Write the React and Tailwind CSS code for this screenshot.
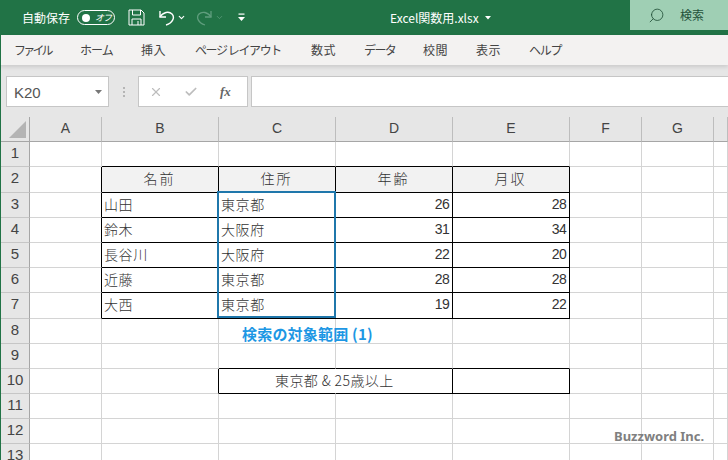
import React from 'react';
import { Search, ChevronDown, Check, X } from 'lucide-react';

const jp = { fontFamily: '"Noto Sans CJK JP", "Liberation Sans", sans-serif' };
const latin = { fontFamily: '"Liberation Sans", sans-serif' };

const tabs = [
  ['ファイル', 'w-[66px] tracking-[-2.8px]'],
  ['ホーム', 'w-[61px] tracking-[-1px]'],
  ['挿入', 'w-[54px] tracking-[0.5px]'],
  ['ページ レイアウト', 'w-[116px] tracking-[-1.4px]'],
  ['数式', 'w-[53px] tracking-[0.5px]'],
  ['データ', 'w-[59px] tracking-[-1.6px]'],
  ['校閲', 'w-[53px] tracking-[0.5px]'],
  ['表示', 'w-[53px] tracking-[0.5px]'],
  ['ヘルプ', 'w-[60px] tracking-[-1.2px]'],
];

const colHeaders = ['A', 'B', 'C', 'D', 'E', 'F', 'G', 'H'];
const colClass = {
  A: 'w-[72px]',
  B: 'w-[117px]',
  C: 'w-[117px]',
  D: 'w-[117px]',
  E: 'w-[117px]',
  F: 'w-[72px]',
  G: 'w-[72px]',
  H: 'w-[14px]',
};

const rowHeights = {
  1: 'h-[25px]', 2: 'h-[26px]', 3: 'h-[25px]', 4: 'h-[25px]', 5: 'h-[25px]', 6: 'h-[25px]', 7: 'h-[26px]',
  8: 'h-[25px]', 9: 'h-[25px]', 10: 'h-[25px]', 11: 'h-[25px]', 12: 'h-[25px]', 13: 'h-[25px]',
};

const people = [
  ['山田', '東京都', 26, 28],
  ['鈴木', '大阪府', 31, 34],
  ['長谷川', '大阪府', 22, 20],
  ['近藤', '東京都', 28, 28],
  ['大西', '東京都', 19, 22],
];

// what sits in each cell of the sheet
const cellAt = (row, col) => {
  if (row === 2) {
    const i = 'BCDE'.indexOf(col);
    if (i >= 0) return { text: ['名前', '住所', '年齢', '月収'][i], align: 'center', tracking: true };
  }
  if (row >= 3 && row <= 7) {
    const p = people[row - 3];
    if (col === 'B') return { text: p[0], align: 'left' };
    if (col === 'C') return { text: p[1], align: 'left' };
    if (col === 'D') return { text: p[2], align: 'right', num: true };
    if (col === 'E') return { text: p[3], align: 'right', num: true };
  }
  return null;
};

const inTable = (row, col) => row >= 2 && row <= 7 && 'BCDE'.includes(col);
const inSearch = (row, col) => row === 10 && 'CDE'.includes(col);

const borderRight = (row, col) => {
  if (row === 10 && col === 'C') return 'border-r-transparent';
  if (row === 10 && col === 'D') return 'border-r-black';
  if (inTable(row, col) || inSearch(row, col)) return 'border-r-black';
  if (row >= 2 && row <= 7 && col === 'A') return 'border-r-black';
  if (row === 10 && col === 'B') return 'border-r-black';
  return 'border-r-[#d4d4d4]';
};

const borderBottom = (row, col) => {
  if (inTable(row, col) || inSearch(row, col)) return 'border-b-black';
  if (row === 1 && 'BCDE'.includes(col)) return 'border-b-black';
  if (row === 9 && 'CDE'.includes(col)) return 'border-b-black';
  return 'border-b-[#d4d4d4]';
};

const Cell = ({ row, col }) => {
  const cell = cellAt(row, col);
  const isHead = row === 2 && 'BCDE'.includes(col);
  return (
    <div className={`${colClass[col]} shrink-0 h-full border-r border-b ${borderRight(row, col)} ${borderBottom(row, col)} ${isHead ? 'bg-[#f2f2f2]' : ''} flex items-center pl-[2px] pr-[3px] pb-[2px] text-[14px] text-[#333] ${cell?.align === 'right' ? 'justify-end' : cell?.align === 'center' ? 'justify-center' : ''}`}>
      {cell && cell.num && <span className="text-[14px] tracking-[-0.7px]" style={latin}>{cell.text}</span>}
      {cell && !cell.num && <span className={`font-light ${cell.tracking ? 'tracking-[2px]' : 'tracking-[0.6px]'}`}>{cell.text}</span>}
      {row === 8 && col === 'C' && (
        <span className="pl-[21px] pt-[8px] text-[15px] font-bold text-[#1d97e4] whitespace-nowrap tracking-[0.2px]">検索の対象範囲 (1)</span>
      )}
      {row === 10 && col === 'C' && (
        <span className="pl-[54px] whitespace-nowrap tracking-[0.4px] font-light">東京都 &amp; 25歳以上</span>
      )}
    </div>
  );
};

const Row = ({ row }) => (
  <div className={`flex ${rowHeights[row]}`}>
    <div className="w-[29px] shrink-0 bg-[#e6e6e6] border-r border-b border-r-[#a6a6a6] border-b-[#c6c6c6] flex items-center justify-center pb-[2px] text-[15px] text-[#444]" style={latin}>
      {row}
    </div>
    {colHeaders.map((c) => (
      <Cell key={c} row={row} col={c} />
    ))}
  </div>
);

const App = () => {
  return (
    <div className="relative w-[728px] h-[460px] overflow-hidden bg-white flex flex-col" style={jp}>
      {/* Title bar */}
      <div className="h-[35px] shrink-0 bg-[#217346] flex items-center text-white">
        <span className="ml-[22px] text-[12px] whitespace-nowrap">自動保存</span>
        <div className="ml-[7px] w-[38px] h-[15px] rounded-full border border-white flex items-center justify-between pl-[4px] pr-[3px]">
          <span className="w-[8px] h-[8px] rounded-full bg-white" />
          <span className="text-[9px] leading-none italic tracking-[-1px]">オフ</span>
        </div>
        <svg className="ml-[13px]" width="17" height="17" viewBox="0 0 17 17" fill="none" stroke="#fff" strokeWidth="1">
          <path d="M1 1h12l3 3v12H1z" />
          <path d="M4.5 1v5h8V1M4 16v-6h9v6M10 12v4" />
        </svg>
        <svg className="ml-[13px]" width="17" height="18" viewBox="0 0 17 18" fill="none" stroke="#fff" strokeWidth="1.4">
          <path d="M2 2v6h6" />
          <path d="M2 8c3-5 9-6 12-3 3 3 1 9-6 11" />
        </svg>
        <ChevronDown className="ml-[2px]" size={9} strokeWidth={3} color="#fff" />
        <svg className="ml-[10px]" width="17" height="18" viewBox="0 0 17 18" fill="none" stroke="#5f9d7d" strokeWidth="1.3">
          <path d="M15 2v6H9" />
          <path d="M15 8C12 3 6 2 3 5 0 8 2 14 9 16" />
        </svg>
        <ChevronDown className="ml-[2px]" size={9} strokeWidth={2} color="#5f9d7d" />
        <svg className="ml-[14px]" width="8" height="9" viewBox="0 0 8 9" fill="#fff">
          <rect x="0.5" y="0.5" width="6" height="1.2" />
          <path d="M0 4h7L3.5 8z" />
        </svg>
        <div className="ml-[144px] flex items-center text-[12px] whitespace-nowrap">
          <span>Excel関数用.xlsx</span>
          <svg className="ml-[6px]" width="6" height="4" viewBox="0 0 6 4" fill="#fff">
            <path d="M0 0h6L3 3.5z" />
          </svg>
        </div>
        <div className="ml-auto w-[98px] h-[30px] self-start bg-[#9fcfb4] flex items-center text-[#24523a]">
          <Search className="ml-[18px] -scale-x-100" size={17} strokeWidth={1.2} />
          <span className="ml-[15px] text-[12px]">検索</span>
        </div>
      </div>

      {/* Ribbon tabs */}
      <div className="h-[30px] shrink-0 bg-[#f3f2f1] flex items-center pl-[13px] pb-[1px] text-[12px] text-[#444] border-l border-l-[#217346] shadow-[0_2px_4px_rgba(0,0,0,0.12)] z-10">
        {tabs.map(([label, w]) => (
          <span key={label} className={`${w} shrink-0 whitespace-nowrap`}>{label}</span>
        ))}
      </div>

      {/* Formula bar */}
      <div className="h-[52px] shrink-0 bg-[#e6e6e6] border-l border-l-[#217346] flex items-start pt-[11px]">
        <div className="ml-[5px] w-[103px] h-[31px] bg-white border border-[#c6c6c6] flex items-center justify-between pl-[7px] pr-[6px] pt-[3px] text-[15px] text-[#555]" style={latin}>
          K20
          <svg className="-mt-[3px]" width="7" height="4" viewBox="0 0 7 4" fill="#777"><path d="M0 0h7L3.5 4z" /></svg>
        </div>
        <div className="w-[29px] h-[31px] flex flex-col items-center justify-center gap-[2px]">
          <span className="w-[2px] h-[2px] bg-[#b5b5b5]" />
          <span className="w-[2px] h-[2px] bg-[#b5b5b5]" />
          <span className="w-[2px] h-[2px] bg-[#b5b5b5]" />
        </div>
        <div className="w-[110px] h-[31px] bg-white border border-[#c6c6c6] flex items-center text-[#bdbdbd]">
          <X className="ml-[10px]" size={14} strokeWidth={2} />
          <Check className="ml-[21px]" size={14} strokeWidth={3} />
          <span className="ml-[22px] text-[13px] italic font-bold text-[#666]" style={{ fontFamily: '"Liberation Serif", serif' }}>fx</span>
        </div>
        <div className="ml-[3px] flex-1 h-[31px] bg-white border-y border-l border-[#c6c6c6]" />
      </div>

      {/* Sheet */}
      <div className="relative flex-1 border-l border-l-[#217346]">
        {/* Column headers */}
        <div className="flex h-[25px]">
          <div className="w-[29px] shrink-0 bg-[#e6e6e6] border-r border-b border-r-[#a6a6a6] border-b-[#a6a6a6] flex items-end justify-end p-[3px]">
            <svg width="17" height="17" viewBox="0 0 17 17" fill="#b4b4b4"><path d="M17 0v17H0z" /></svg>
          </div>
          {colHeaders.map((c) => (
            <div key={c} className={`${colClass[c]} shrink-0 bg-[#e6e6e6] border-r border-b border-r-[#bdbdbd] border-b-[#a6a6a6] flex items-center justify-center pb-[1px] text-[14px] text-[#444]`} style={latin}>
              {c === 'H' ? '' : c}
            </div>
          ))}
        </div>
        {Object.keys(rowHeights).map((r) => (
          <Row key={r} row={Number(r)} />
        ))}

        {/* Selected range C3:C7 */}
        <div className="absolute left-[216px] top-[74px] w-[119px] h-[127px] border-2 border-[#1f77ab] pointer-events-none" />

        {/* Watermark */}
        <span className="absolute left-[613px] top-[310px] text-[13px] font-bold text-[#808080] whitespace-nowrap" style={{ fontFamily: '"Noto Sans", sans-serif' }}>
          Buzzword Inc.
        </span>
      </div>
    </div>
  );
};

export default App;
